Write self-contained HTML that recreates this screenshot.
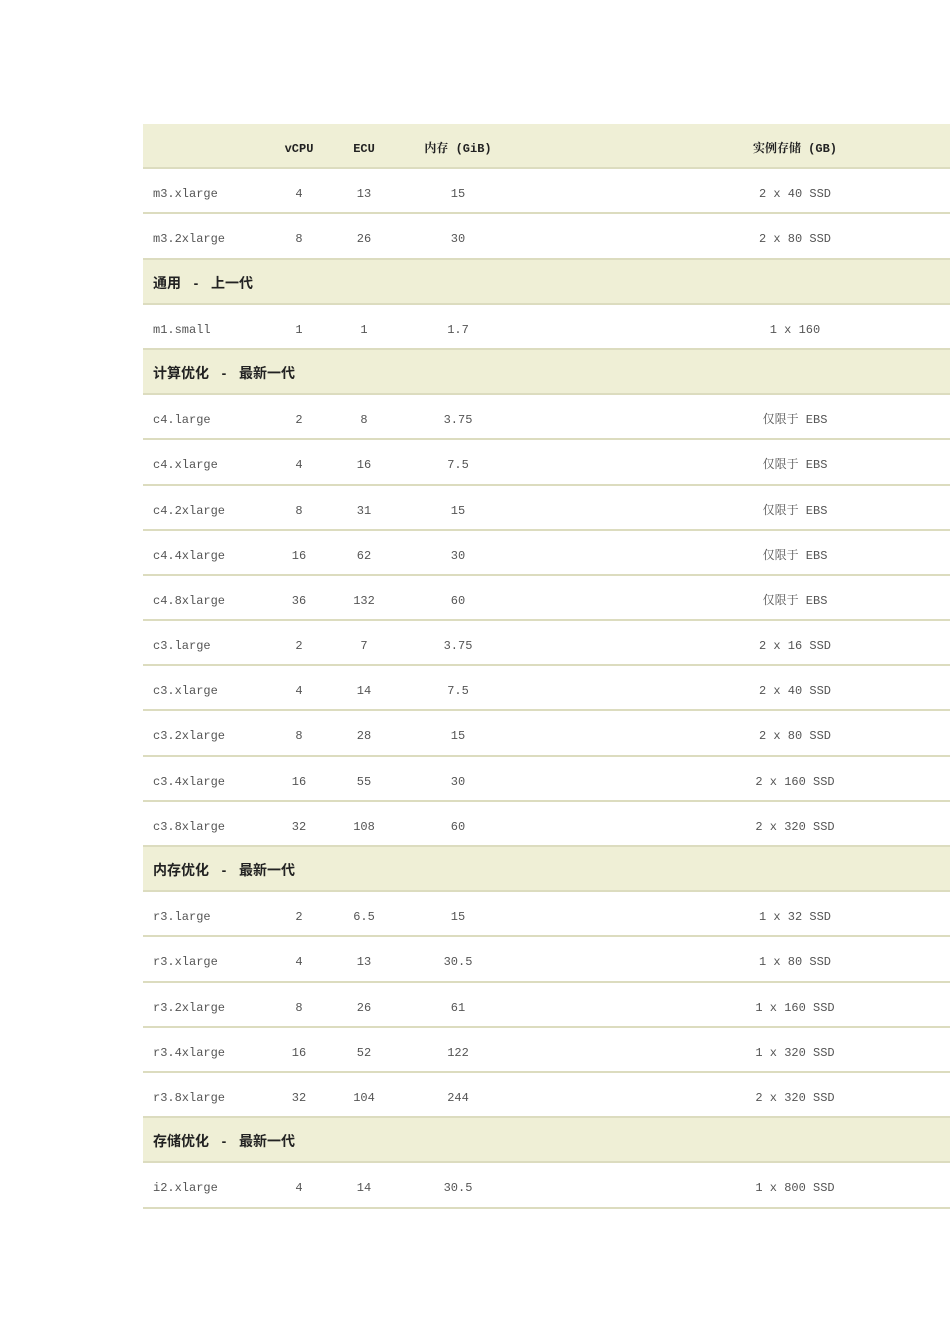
<!DOCTYPE html>
<html><head><meta charset="utf-8"><style>
body{margin:0;width:950px;height:1344px;background:#fff;position:relative;overflow:hidden}
.t{position:absolute;left:143px;top:124px;width:807px}
.r{position:relative;height:45.2px;box-sizing:border-box;border-bottom:2px solid #dcdcbf;font-family:"Liberation Mono","Noto Serif CJK SC",monospace;font-size:12px;color:#555;line-height:43px}
.h{background:#efefd6;color:#222;font-weight:bold}
.r span{position:absolute;top:4px;width:120px;text-align:center;white-space:pre}
.r .n{left:10px;width:auto;text-align:left}
.a{left:96px}.b{left:161px}.c{left:255px}.d{left:592px}
.s{font-family:"Liberation Sans","Noto Sans CJK SC",sans-serif;font-size:14px}
.s .n{top:2px}
.s i{font-style:normal;display:inline-block;width:30px;text-align:center}
</style></head><body><div class="t">
<div class="r h"><span class="a">vCPU</span><span class="b">ECU</span><span class="c">内存 (GiB)</span><span class="d">实例存储 (GB)</span></div>
<div class="r"><span class="n">m3.xlarge</span><span class="a">4</span><span class="b">13</span><span class="c">15</span><span class="d">2 x 40 SSD</span></div>
<div class="r"><span class="n">m3.2xlarge</span><span class="a">8</span><span class="b">26</span><span class="c">30</span><span class="d">2 x 80 SSD</span></div>
<div class="r h s"><span class="n">通用<i>-</i>上一代</span></div>
<div class="r"><span class="n">m1.small</span><span class="a">1</span><span class="b">1</span><span class="c">1.7</span><span class="d">1 x 160</span></div>
<div class="r h s"><span class="n">计算优化<i>-</i>最新一代</span></div>
<div class="r"><span class="n">c4.large</span><span class="a">2</span><span class="b">8</span><span class="c">3.75</span><span class="d">仅限于 EBS</span></div>
<div class="r"><span class="n">c4.xlarge</span><span class="a">4</span><span class="b">16</span><span class="c">7.5</span><span class="d">仅限于 EBS</span></div>
<div class="r"><span class="n">c4.2xlarge</span><span class="a">8</span><span class="b">31</span><span class="c">15</span><span class="d">仅限于 EBS</span></div>
<div class="r"><span class="n">c4.4xlarge</span><span class="a">16</span><span class="b">62</span><span class="c">30</span><span class="d">仅限于 EBS</span></div>
<div class="r"><span class="n">c4.8xlarge</span><span class="a">36</span><span class="b">132</span><span class="c">60</span><span class="d">仅限于 EBS</span></div>
<div class="r"><span class="n">c3.large</span><span class="a">2</span><span class="b">7</span><span class="c">3.75</span><span class="d">2 x 16 SSD</span></div>
<div class="r"><span class="n">c3.xlarge</span><span class="a">4</span><span class="b">14</span><span class="c">7.5</span><span class="d">2 x 40 SSD</span></div>
<div class="r"><span class="n">c3.2xlarge</span><span class="a">8</span><span class="b">28</span><span class="c">15</span><span class="d">2 x 80 SSD</span></div>
<div class="r"><span class="n">c3.4xlarge</span><span class="a">16</span><span class="b">55</span><span class="c">30</span><span class="d">2 x 160 SSD</span></div>
<div class="r"><span class="n">c3.8xlarge</span><span class="a">32</span><span class="b">108</span><span class="c">60</span><span class="d">2 x 320 SSD</span></div>
<div class="r h s"><span class="n">内存优化<i>-</i>最新一代</span></div>
<div class="r"><span class="n">r3.large</span><span class="a">2</span><span class="b">6.5</span><span class="c">15</span><span class="d">1 x 32 SSD</span></div>
<div class="r"><span class="n">r3.xlarge</span><span class="a">4</span><span class="b">13</span><span class="c">30.5</span><span class="d">1 x 80 SSD</span></div>
<div class="r"><span class="n">r3.2xlarge</span><span class="a">8</span><span class="b">26</span><span class="c">61</span><span class="d">1 x 160 SSD</span></div>
<div class="r"><span class="n">r3.4xlarge</span><span class="a">16</span><span class="b">52</span><span class="c">122</span><span class="d">1 x 320 SSD</span></div>
<div class="r"><span class="n">r3.8xlarge</span><span class="a">32</span><span class="b">104</span><span class="c">244</span><span class="d">2 x 320 SSD</span></div>
<div class="r h s"><span class="n">存储优化<i>-</i>最新一代</span></div>
<div class="r"><span class="n">i2.xlarge</span><span class="a">4</span><span class="b">14</span><span class="c">30.5</span><span class="d">1 x 800 SSD</span></div>
</div></body></html>
